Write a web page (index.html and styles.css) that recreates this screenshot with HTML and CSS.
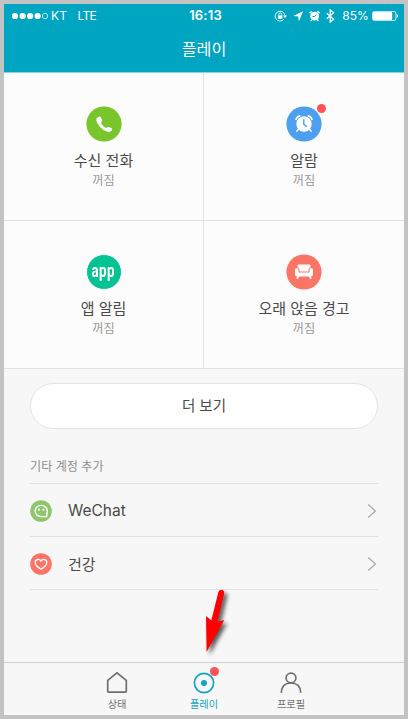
FILE: index.html
```html
<!DOCTYPE html>
<html lang="ko">
<head>
<meta charset="utf-8">
<title>플레이</title>
<link rel="stylesheet" href="styles.css">
</head>
<body>
<div class="screen">
  <header class="header">
    <div class="status">
      <div class="status-left">
        <svg class="signal" width="38" height="8" viewBox="0 0 38 8"><g fill="#fff"><circle cx="4" cy="4" r="3.1"/><circle cx="11.6" cy="4" r="3.1"/><circle cx="19.1" cy="4" r="3.1"/><circle cx="26.6" cy="4" r="3.1"/></g><circle cx="34" cy="4" r="2.7" fill="none" stroke="#fff" stroke-width=".7"/></svg>
        <span class="carrier">KT</span><span class="network">LTE</span>
      </div>
      <div class="clock">16:13</div>
      <div class="status-right">
        <svg width="62" height="14" viewBox="0 0 62 14" fill="none" stroke="#fff">
          <path d="M9.7 10.4A4.9 4.9 0 1 1 10.9 6.5" stroke-width=".9"/><path d="M9 6.4h4L11 9z" fill="#fff" stroke="none"/>
          <rect x="4" y="6.4" width="4.4" height="3.3" fill="#fff" stroke="none"/><path d="M4.8 6.5V5.2a1.4 1.4 0 0 1 2.8 0v1.3" stroke-width=".8"/>
          <path d="M29 2.2 24.9 12.4 24.2 7.6 19.3 7z" fill="#fff" stroke="none"/>
          <circle cx="40.6" cy="7.2" r="4.4" fill="#fff" stroke="none"/><path d="M35.6 4.3 37.8 2.4M45.6 4.3 43.4 2.4M37.8 10.8 36.8 12M43.4 10.8 44.4 12" stroke-width="1.4"/><path d="M40.8 7.5 42.6 5.6M40.8 7.5H38.4" stroke="#00a5c2" stroke-width="1"/>
          <path d="M52.8 4.3 59.6 10.2 56.2 13V1L59.6 3.8 52.8 9.7" stroke-width="1.25"/>
        </svg>
        <span class="percent">85%</span>
        <svg width="27" height="10" viewBox="0 0 27 10"><rect x=".5" y=".4" width="23.4" height="9.2" rx="1.8" fill="none" stroke="#fff" stroke-width=".8"/><rect x="1" y="1" width="19.2" height="8" rx=".8" fill="#fff"/><path d="M24.7 3.2q1.5.3 1.5 1.8t-1.5 1.8z" fill="#fff"/></svg>
      </div>
    </div>
    <h1 class="title">플레이</h1>
  </header>

  <section class="tiles">
    <div class="tile">
      <svg class="tile-icon" width="36" height="36" viewBox="0 0 36 36"><circle cx="18" cy="18" r="17.6" fill="#78c62c"/><path d="M12.3 10.9q1.8-1.1 2.6.6l1.2 2.4q.5 1.1-.4 1.9-1 .7-.3 1.9 1.4 2.4 3.8 3.9 1.1.7 1.9-.3.8-1 1.9-.4l2.3 1.2q1.6.9.4 2.4-1.4 1.8-3.7 1.4-3.9-.7-7.8-4.7-3.6-3.8-4-7.2-.2-2 2.1-3.1z" fill="#fff"/></svg>
      <div class="tile-name">수신 전화</div><div class="tile-state">꺼짐</div>
    </div>
    <div class="tile">
      <span class="icon-wrap">
        <svg class="tile-icon" width="36" height="36" viewBox="0 0 36 36"><circle cx="18" cy="18" r="17.6" fill="#4ca0ef"/><g fill="none" stroke="#fff" stroke-linecap="round"><path d="M10.1 13.3Q10.8 10.8 13.5 9.9M22.5 9.9Q25.2 10.8 25.9 13.3" stroke-width="1.8"/><path d="M12.4 23.2 11 25M23.6 23.2 25 25" stroke-width="1.8"/></g><circle cx="18" cy="18" r="7.7" fill="#fff"/><path d="M17.8 13.2V18.2L20.9 20.8" fill="none" stroke="#4ca0ef" stroke-width="1.4"/></svg>
        <i class="badge"></i>
      </span>
      <div class="tile-name">알람</div><div class="tile-state">꺼짐</div>
    </div>
    <div class="tile">
      <div class="app-icon"><span>app</span></div>
      <div class="tile-name">앱 알림</div><div class="tile-state">꺼짐</div>
    </div>
    <div class="tile">
      <svg class="tile-icon" width="36" height="36" viewBox="0 0 36 36"><circle cx="18" cy="18" r="17.6" fill="#fa7565"/><path d="M13 10.4h10q1.3 0 1.5 1.4l.2 1.3q-2 .6-2.2 2.5v1.9h-9v-1.9q-.2-1.9-2.2-2.5l.2-1.3q.2-1.4 1.5-1.4z" fill="#fff"/><path d="M9.1 15.5q0-1.5 1.6-1.5 1.8 0 1.8 1.9v2.5h11v-2.5q0-1.9 1.8-1.9 1.6 0 1.6 1.5v5.2q0 1.8-1.8 1.8h-.2l.7 2.4-1.5.2-1.3-2.6h-9.6l-1.3 2.6-1.5-.2.7-2.4h-.2q-1.8 0-1.8-1.8z" fill="#fff"/></svg>
      <div class="tile-name">오래 앉음 경고</div><div class="tile-state">꺼짐</div>
    </div>
  </section>

  <main class="content">
    <div class="more">더 보기</div>
    <h2 class="section-title">기타 계정 추가</h2>
    <div class="row">
      <svg width="22" height="22" viewBox="0 0 22 22"><circle cx="11" cy="11" r="10.8" fill="#8fc66c"/><path d="M16.8 14.1V16.6H11.2A6.1 5.6 0 1 1 17.3 11Q17.3 12.8 16.8 14.1z" fill="none" stroke="#fff" stroke-width="1.4" stroke-linejoin="round"/><circle cx="8.9" cy="9.7" r="1.1" fill="#fff"/><circle cx="13.4" cy="9.7" r="1.1" fill="#fff"/></svg>
      <span class="row-name">WeChat</span>
      <svg class="chevron" width="10" height="16" viewBox="0 0 10 16"><path d="M1.2 1.4 8.4 8 1.2 14.6"/></svg>
    </div>
    <div class="row">
      <svg width="22" height="22" viewBox="0 0 22 22"><circle cx="11" cy="11" r="10.8" fill="#fa7565"/><path d="M11 16.3Q5.2 12.7 5.2 9.5C5.2 6 9.6 5.4 11 8.1 12.4 5.4 16.8 6 16.8 9.5Q16.8 12.7 11 16.3z" fill="none" stroke="#fff" stroke-width="1.35" stroke-linejoin="round"/></svg>
      <span class="row-name korean">건강</span>
      <svg class="chevron" width="10" height="16" viewBox="0 0 10 16"><path d="M1.2 1.4 8.4 8 1.2 14.6"/></svg>
    </div>
  </main>

  <nav class="tabs">
    <div class="tab">
      <svg width="24" height="24" viewBox="0 0 24 24"><path d="M2.7 9.3 12 1.9l9.3 7.4v10.9q0 1-1 1H3.7q-1 0-1-1z"/></svg>
      <span>상태</span>
    </div>
    <div class="tab active">
      <span class="icon-wrap"><svg width="24" height="24" viewBox="0 0 24 24"><circle cx="12" cy="12" r="9.6"/><circle class="dot" cx="12" cy="12" r="3"/></svg><i class="badge"></i></span>
      <span>플레이</span>
    </div>
    <div class="tab">
      <svg width="24" height="24" viewBox="0 0 24 24"><circle cx="12" cy="7" r="4.9"/><path d="M2.2 21.9Q2.6 12 12 12t9.8 9.9"/></svg>
      <span>프로필</span>
    </div>
  </nav>

  <svg class="pointer" width="48" height="76" viewBox="0 0 48 76"><path d="M18.4 9Q20 6 23 7.2q1.8 1 1 3.5L17.6 38.8 24.2 37 6.6 69 6 33 11.3 37.5z"/></svg>
</div>
</body>
</html>
```
FILE: styles.css
```css
* { box-sizing: border-box; }
body {
  margin: 0;
  background: #c3c3c3;
  font-family: Inter, "Noto Sans CJK KR", sans-serif;
  color: #4a4a4a;
}
svg { display: block; flex: none; }
.screen {
  position: relative;
  display: flex;
  flex-direction: column;
  width: 400px;
  height: 711px;
  margin: 4px;
  background: #f7f7f7;
}
.header {
  height: 69px;
  background: #00a5c2;
  border-bottom: 1px solid #8fd3e0;
  color: #fff;
}
.status {
  display: grid;
  grid-template-columns: 1fr auto 1fr;
  align-items: center;
  height: 23px;
  padding: 0 5px 0 7px;
  font-size: 12px;
  line-height: 23px;
}
.status-left, .status-right { display: flex; align-items: center; }
.status-right { justify-content: flex-end; }
.carrier { margin-left: 2px; letter-spacing: .3px; }
.network { margin-left: 10px; letter-spacing: -.6px; }
.clock { font-size: 13px; font-weight: 600; padding-left: 1px; letter-spacing: .2px; }
.percent { margin: 0 3px 0 6px; letter-spacing: .1px; }
.title {
  margin: 0;
  padding-top: 9px;
  font: 400 16.2px/24px "Noto Sans CJK KR", sans-serif;
  text-align: center;
}
.tiles {
  display: grid;
  grid-template-columns: 200px 200px;
  grid-template-rows: 148px 148px;
  background: #fcfcfc;
}
.tile {
  display: flex;
  flex-direction: column;
  align-items: center;
  padding-top: 33px;
  border-bottom: 1px solid #e2e2e2;
  font-family: "Noto Sans CJK KR", sans-serif;
}
.tile:nth-child(odd) { border-right: 1px solid #e2e2e2; }
.icon-wrap { position: relative; }
.badge {
  position: absolute;
  top: -2px;
  right: -4px;
  width: 9px;
  height: 9px;
  border-radius: 50%;
  background: #ff5457;
}
.app-icon {
  display: flex;
  justify-content: center;
  width: 36px;
  height: 36px;
  border: .5px solid #fcfcfc;
  border-radius: 50%;
  background: #05c293;
  color: #fff;
  font: 700 17.5px/32px Roboto, sans-serif;
}
.app-icon span { transform: scaleX(.77); letter-spacing: .4px; }
.tile-name { margin-top: 7px; font-size: 15px; line-height: 22px; white-space: nowrap; }
.tile-state { margin-top: 1px; font-size: 12.2px; line-height: 16px; color: #999; }
.content { flex: 1; padding: 14px 26px 0; }
.more {
  height: 46px;
  border: 1px solid #e4e4e4;
  border-radius: 23px;
  background: #fff;
  font: 14.5px/42px "Noto Sans CJK KR", sans-serif;
  text-align: center;
}
.section-title {
  height: 55px;
  margin: 0;
  padding-top: 28px;
  border-bottom: 1px solid #e2e2e2;
  font: 400 12.1px/18px "Noto Sans CJK KR", sans-serif;
  color: #8e8e8e;
}
.row {
  display: flex;
  align-items: center;
  height: 53px;
  padding: 1px 1px 0 0;
  border-bottom: 1px solid #e2e2e2;
}
.row-name { flex: 1; margin-left: 16px; font-size: 15.5px; }
.korean { font-family: "Noto Sans CJK KR", sans-serif; font-size: 15px; line-height: 22px; }
.chevron path { fill: none; stroke: #aaa; stroke-width: 1.3; }
.tabs {
  display: flex;
  justify-content: center;
  height: 53px;
  padding-top: 8px;
  border-top: 1px solid #cecece;
}
.tab {
  display: flex;
  flex-direction: column;
  align-items: center;
  width: 87px;
  font: 10.2px/17px "Noto Sans CJK KR", sans-serif;
  color: #6f6f6f;
}
.tab svg { fill: none; stroke: currentColor; stroke-width: 1.7; }
.tab.active { color: #12a5bf; }
.tab .dot { fill: currentColor; stroke: none; }
.tab .badge { top: -4px; right: -3px; }
.pointer { position: absolute; left: 196px; top: 579px; }
.pointer path { fill: #f00; filter: drop-shadow(3px 3px 2px rgba(0, 0, 0, .65)); }
```
